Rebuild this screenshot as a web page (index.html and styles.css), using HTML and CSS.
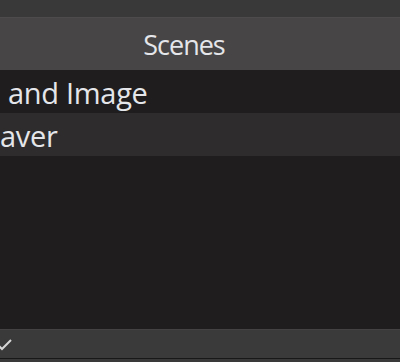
FILE: index.html
```html
<!DOCTYPE html>
<html lang="en">
<head>
    <meta charset="UTF-8">
    <meta name="viewport" content="width=device-width, initial-scale=1.0">
    <title>Scenes</title>
    <link rel="stylesheet" href="styles.css">
</head>
<body>
    <div id="dock">
        <div class="dock-strip"></div>
        <div class="dock-header">Scenes</div>
        <ul class="scene-list">
            <li class="scene-item first"><span class="scene-name">and Image</span></li>
            <li class="scene-item alt"><span class="scene-name">aver</span></li>
        </ul>
        <div class="dock-footer">
            <svg class="check-icon" width="14" height="14" viewBox="0 0 14 14">
                <polyline points="-3,7 2,12 11,3" fill="none" stroke="#d6d6d6" stroke-width="2"/>
            </svg>
        </div>
        <div class="dock-bottom"></div>
    </div>
</body>
</html>
```

FILE: styles.css
```css
body {
    margin: 0;
    background: #1f1d1e;
    font-family: "Open Sans", "Noto Sans", sans-serif;
    overflow: hidden;
}

#dock {
    height: 362px;
    display: flex;
    flex-direction: column;
    color: #e4e6ea;
}

/* Topo */
.dock-strip {
    height: 17px;
    background: #3a3939;
}

.dock-header {
    height: 53px;
    background: #474545;
    border-top: 1px solid #4d4b4b;
    box-sizing: border-box;
    display: flex;
    align-items: center;
    justify-content: center;
    padding-right: 32px;
    padding-top: 1px;
    font-size: 27px;
    letter-spacing: -1px;
}

/* Lista de cenas */
.scene-list {
    list-style: none;
    margin: 0;
    padding: 0;
    flex: 1;
    overflow: hidden;
}

.scene-item {
    height: 43px;
    display: flex;
    align-items: center;
    white-space: nowrap;
    font-size: 29px;
    letter-spacing: -0.3px;
    padding-top: 2px;
    box-sizing: border-box;
    overflow: hidden;
}

.scene-item.first {
    padding-left: 8px;
}

.scene-item.alt {
    background: #2e2c2d;
}

/* Rodapé */
.dock-footer {
    height: 29px;
    background: #3b3a3a;
    border-top: 1px solid #444242;
    box-sizing: border-box;
    display: flex;
    align-items: center;
}

.check-icon {
    display: block;
}

.dock-bottom {
    height: 3px;
    background: #3a3939;
    border-top: 1px solid #191818;
}
```
